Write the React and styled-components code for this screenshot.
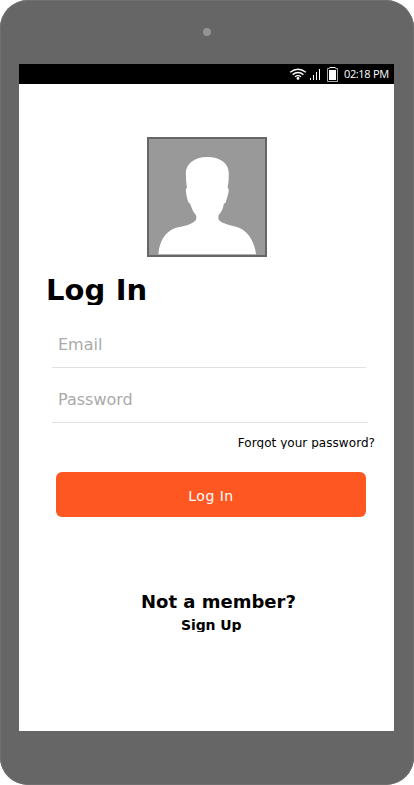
import React from "react";
import styled, { createGlobalStyle } from "styled-components";

const GlobalStyle = createGlobalStyle`
  * { box-sizing: border-box; }
  body { margin: 0; background: #fff; }
`;

const Phone = styled.div`
  width: 414px;
  height: 785px;
  padding: 0 20px 54px 19px;
  display: flex;
  flex-direction: column;
  background: #666;
  border-radius: 28px;
  box-shadow: inset 0 0 0 1px #707070;
  font-family: Verdana, "DejaVu Sans", sans-serif;
  color: #000;
`;

const Bezel = styled.div`
  height: 64px;
  padding: 28px 0 0 184px;
`;

const Camera = styled.div`
  width: 8px;
  height: 8px;
  border-radius: 50%;
  background: #949494;
`;

const StatusBar = styled.header`
  height: 20px;
  padding-right: 5px;
  display: flex;
  align-items: center;
  justify-content: flex-end;
  background: #000;
  color: #fff;
`;

const Clock = styled.time`
  width: 45px;
  margin-left: 5px;
  font: 11px/20px "Open Sans", sans-serif;
  letter-spacing: -0.4px;
  word-spacing: 0.6px;
  white-space: nowrap;
`;

const Screen = styled.main`
  flex: 1;
  display: flex;
  flex-direction: column;
  background: #fff;
`;

const Avatar = styled.div`
  width: 120px;
  height: 120px;
  margin: 53px 0 0 128px;
  border: 2px solid #666;
  background: #999;
  svg { display: block; }
`;

const Title = styled.h1`
  height: 34px;
  margin: 14px 0 0 27px;
  overflow: hidden;
  padding-top: 1px;
  font-size: 29px;
  line-height: 37px;
  letter-spacing: 0.1px;
  font-weight: 700;
  height: 34px;
`;

const Form = styled.form`
  display: flex;
  flex-direction: column;
`;

const Field = styled.input`
  width: ${(p) => p.$width}px;
  height: ${(p) => p.$height}px;
  margin-left: 33px;
  padding: ${(p) => p.$top}px 6px 0;
  border: 0;
  border-bottom: 1px solid #e1e1e1;
  outline: 0;
  background: transparent;
  font: 16px "DejaVu Sans", sans-serif;
  &::placeholder { color: #aaa; opacity: 1; }
`;

const Forgot = styled.a`
  height: 14px;
  margin: 12px 19px 0 0;
  align-self: flex-end;
  overflow: hidden;
  font-size: 12px;
  line-height: 16px;
  letter-spacing: 0.05px;
  white-space: nowrap;
`;

const Submit = styled.button`
  width: 310px;
  height: 45px;
  margin: 23px 0 0 37px;
  padding: 2px 0 0;
  border: 0;
  border-radius: 6px;
  background: #ff5722;
  color: #fff;
  font: 14px "DejaVu Sans", sans-serif;
  letter-spacing: 0.5px;
`;

const Member = styled.h2`
  height: 22px;
  margin: 74px 0 0 122px;
  font-size: 18px;
  line-height: 22px;
  white-space: nowrap;
`;

const SignUp = styled.a`
  height: 16px;
  margin: 3px 0 0 162px;
  overflow: hidden;
  font-size: 14px;
  line-height: 18px;
  letter-spacing: -0.1px;
  font-weight: 700;
  white-space: nowrap;
`;

const StatusIcons = () => (
  <svg width="50" height="20" viewBox="0 0 50 20">
    <g fill="none" stroke="#fff" strokeWidth="1.35">
      <path d="M1.2 8.2Q9 2.3 16.8 8.2" />
      <path d="M3.6 10.6Q9 6.4 14.4 10.6" />
      <path d="M6 12.8Q9 10.4 12 12.8" />
    </g>
    <circle cx="9" cy="14.4" r="1.4" fill="#fff" />
    <path d="M21 14h1v2h-1zM24 11h1v5h-1zM27 8h1v8h-1zM30 5h1v11h-1z" fill="#fff" />
    <path d="M38.5 4.5h2v-1h6v1h2v13h-10z" fill="none" stroke="#aaa" />
    <path d="M40 6h7v10h-7zM41 3h5v1h-5z" fill="#fff" />
  </svg>
);

const Silhouette = () => (
  <svg width="116" height="116" viewBox="0 0 116 116">
    <path
      fill="#fff"
      d="M58 18C45 18 37 25 36.8 34Q36.8 43 38 49Q36.5 49 37 53Q38 61 40 64Q41 64 41.6 66C43 70 44 73 46.6 75.5C47.8 78 47.5 80 46.5 81.5C42 86 35 87 28 88.5C15 92 10 105 9.5 115.3H107C106 106 101 93 90 88.7C82 86 74 85 70 81.2C68.8 79 69.5 76.5 70 75.5C73 73 74 69 74.8 65Q75.5 64 76.5 64Q78.5 58 79.6 53Q80 49 78.6 49Q80 42 79.8 34C79.5 24 71 18 58 18Z"
    />
  </svg>
);

export default function App() {
  return (
    <>
      <GlobalStyle />
      <Phone>
        <Bezel><Camera /></Bezel>
        <StatusBar>
          <StatusIcons />
          <Clock>02:18 PM</Clock>
        </StatusBar>
        <Screen>
          <Avatar><Silhouette /></Avatar>
          <Title>Log In</Title>
          <Form onSubmit={(e) => e.preventDefault()}>
            <Field type="email" placeholder="Email" $width={314} $height={63} $top={17} />
            <Field type="password" placeholder="Password" $width={316} $height={55} $top={9} />
            <Forgot>Forgot your password?</Forgot>
            <Submit>Log In</Submit>
          </Form>
          <Member>Not a member?</Member>
          <SignUp>Sign Up</SignUp>
        </Screen>
      </Phone>
    </>
  );
}
